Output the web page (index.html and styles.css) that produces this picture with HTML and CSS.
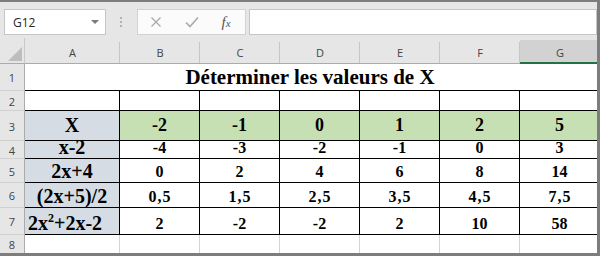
FILE: index.html
```html
<!DOCTYPE html>
<html lang="fr">

<head>
    <meta charset="utf-8">
    <meta name="viewport" content="width=device-width, initial-scale=1">
    <link rel="stylesheet" href="styles.css">
</head>

<body>
    <div class="window">
        <div class="toolbar">
            <div class="namebox"><span>G12</span><span class="caret"></span></div>
            <div class="grip"><i></i><i></i><i></i></div>
            <div class="fbuttons">
                <svg width="12" height="12" viewBox="0 0 12 12"><path d="M1.5 1.5 L10.5 10.5 M10.5 1.5 L1.5 10.5" stroke="#a9a9a9" stroke-width="1.3" fill="none"/></svg>
                <svg width="14" height="12" viewBox="0 0 14 12"><path d="M1 6.5 L5 10.5 L13 1.5" stroke="#a9a9a9" stroke-width="1.6" fill="none"/></svg>
                <span class="fx">f<small>x</small></span>
            </div>
            <div class="finput"></div>
        </div>

        <div class="sheet">
            <div class="row head">
                <div class="corner"><span class="tri"></span></div>
                <div class="ch col-a">A</div>
                <div class="ch">B</div>
                <div class="ch">C</div>
                <div class="ch">D</div>
                <div class="ch">E</div>
                <div class="ch">F</div>
                <div class="ch sel">G</div>
            </div>

            <div class="row r1">
                <div class="rh">1</div>
                <div class="title">Déterminer les valeurs de X</div>
            </div>

            <div class="row r2">
                <div class="rh">2</div>
                <div class="cell col-a"></div>
                <div class="cell"></div>
                <div class="cell"></div>
                <div class="cell"></div>
                <div class="cell"></div>
                <div class="cell"></div>
                <div class="cell"></div>
            </div>

            <div class="row r3">
                <div class="rh">3</div>
                <div class="cell col-a label big">X</div>
                <div class="cell green">-2</div>
                <div class="cell green">-1</div>
                <div class="cell green">0</div>
                <div class="cell green">1</div>
                <div class="cell green">2</div>
                <div class="cell green">5</div>
            </div>

            <div class="row r4">
                <div class="rh">4</div>
                <div class="cell col-a label">x-2</div>
                <div class="cell">-4</div>
                <div class="cell">-3</div>
                <div class="cell">-2</div>
                <div class="cell">-1</div>
                <div class="cell">0</div>
                <div class="cell">3</div>
            </div>

            <div class="row r5">
                <div class="rh">5</div>
                <div class="cell col-a label">2x+4</div>
                <div class="cell">0</div>
                <div class="cell">2</div>
                <div class="cell">4</div>
                <div class="cell">6</div>
                <div class="cell">8</div>
                <div class="cell">14</div>
            </div>

            <div class="row r6">
                <div class="rh">6</div>
                <div class="cell col-a label">(2x+5)/2</div>
                <div class="cell dec">0,5</div>
                <div class="cell dec">1,5</div>
                <div class="cell dec">2,5</div>
                <div class="cell dec">3,5</div>
                <div class="cell dec">4,5</div>
                <div class="cell dec">7,5</div>
            </div>

            <div class="row r7">
                <div class="rh">7</div>
                <div class="cell col-a label poly"><span>2x<sup>2</sup>+2x-2</span></div>
                <div class="cell">2</div>
                <div class="cell">-2</div>
                <div class="cell">-2</div>
                <div class="cell">2</div>
                <div class="cell">10</div>
                <div class="cell">58</div>
            </div>

            <div class="row r8">
                <div class="rh">8</div>
                <div class="cell col-a empty"></div>
                <div class="cell empty"></div>
                <div class="cell empty"></div>
                <div class="cell empty"></div>
                <div class="cell empty"></div>
                <div class="cell empty"></div>
                <div class="cell empty"></div>
            </div>
        </div>
    </div>
</body>

</html>
```

FILE: styles.css
```css
body {
    margin: 0;
}

.window {
    width: 600px;
    height: 256px;
    box-sizing: border-box;
    border-top: 2px solid #7d7d7d;
    border-right: 3px solid #7d7d7d;
    border-bottom: 3px solid #7d7d7d;
    background: #e6e6e6;
    overflow: hidden;
    font-family: "Open Sans", sans-serif;
}

/* formula bar */

.toolbar {
    height: 36px;
    box-sizing: border-box;
    padding-top: 7px;
    display: flex;
    align-items: flex-start;
}

.namebox {
    margin-left: 4px;
    width: 102px;
    height: 26px;
    box-sizing: border-box;
    border: 1px solid #c6c6c6;
    background: #fff;
    display: flex;
    align-items: center;
    justify-content: space-between;
    padding: 0 6px 0 8px;
    font-size: 12px;
    color: #262626;
}

.caret {
    border-left: 4px solid transparent;
    border-right: 4px solid transparent;
    border-top: 4px solid #7a7a7a;
}

.grip {
    width: 29px;
    height: 26px;
    display: flex;
    flex-direction: column;
    align-items: center;
    justify-content: center;
    gap: 2px;
}

.grip i {
    width: 2px;
    height: 2px;
    background: #b2b2b2;
}

.fbuttons {
    margin-left: 2px;
    width: 109px;
    height: 26px;
    box-sizing: border-box;
    border: 1px solid #d2d2d2;
    background: #fbfbfb;
    display: grid;
    grid-template-columns: 36px 36px 36px;
    align-items: center;
    justify-items: center;
}

.fx {
    font-family: "Liberation Serif", serif;
    font-style: italic;
    font-size: 15px;
    color: #555;
    padding-right: 4px;
}

.fx small {
    font-size: 11px;
}

.finput {
    flex: 1;
    margin-left: 3px;
    height: 26px;
    box-sizing: border-box;
    border: 1px solid #c6c6c6;
    background: #fff;
}

/* grid */

.row {
    display: flex;
}

.row > div {
    box-sizing: border-box;
    flex: none;
}

.head {
    height: 26px;
}

.corner {
    width: 25px;
    border-right: 1px solid #c8c8c8;
    border-bottom: 1px solid #ababab;
    display: flex;
    justify-content: flex-end;
    align-items: flex-end;
    padding: 0 2px 2px 0;
}

.tri {
    width: 14px;
    height: 14px;
    background: #bdbdbd;
    clip-path: polygon(100% 0, 100% 100%, 0 100%);
}

.ch {
    width: 80px;
    border-bottom: 1px solid #ababab;
    background: linear-gradient(#c6c6c6, #c6c6c6) right bottom / 1px 21px no-repeat;
    display: flex;
    align-items: center;
    justify-content: center;
    padding-top: 4px;
    font-size: 11px;
    color: #444;
}

.ch.sel {
    margin-top: 2px;
    padding-top: 2px;
    background: #d2d2d2;
    border-bottom: 2px solid #217346;
}

.rh {
    width: 25px;
    border-right: 1px solid #ababab;
    border-bottom: 1px solid #d0d0d0;
    display: flex;
    align-items: center;
    justify-content: center;
    font-size: 11px;
    color: #444;
    padding-top: 1px;
}

.col-a {
    width: 95px !important;
}

.title {
    flex: 1 !important;
    background: #fff;
    border-bottom: 1px solid #000;
    display: flex;
    align-items: flex-end;
    justify-content: center;
    font-family: "Liberation Serif", serif;
    font-weight: bold;
    font-size: 21px;
    padding-right: 2px;
}

.cell {
    width: 80px;
    background: #fff;
    border-right: 1px solid #000;
    border-bottom: 1px solid #000;
    display: flex;
    align-items: flex-end;
    justify-content: center;
    padding-bottom: 1px;
    font-family: "Liberation Serif", serif;
    font-weight: bold;
    font-size: 16px;
    line-height: 18px;
}

.cell.dec {
    letter-spacing: 1px;
    padding-left: 1px;
}

.cell.label {
    background: #d6dce4;
    font-size: 20px;
    line-height: 20px;
}

.cell.poly {
    justify-content: flex-start;
    padding-left: 3px;
}

.cell.green {
    background: #c6e0b4;
    font-size: 18px;
    align-items: center;
}

.cell.big {
    align-items: center;
}

.cell sup {
    font-size: 12px;
    line-height: 0;
    vertical-align: 8px;
}

.cell.empty {
    border-right-color: #d4d4d4;
    border-bottom: none;
}

.r1 { height: 27px; }
.r2 { height: 20px; }
.r3 { height: 30px; }
.r4 { height: 18px; }
.r5 { height: 24px; }
.r6 { height: 25px; }
.r7 { height: 27px; }
.r8 { height: 19px; }
```
